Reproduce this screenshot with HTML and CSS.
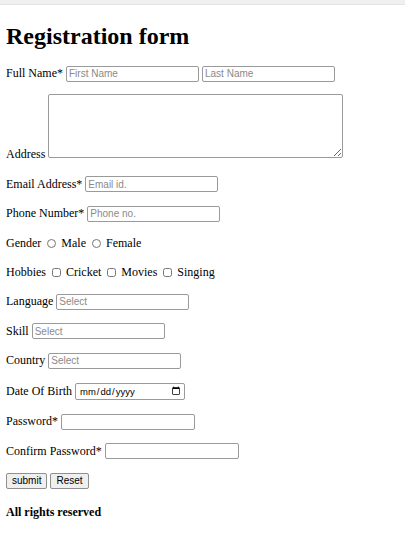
FILE: index.html
```html
<!DOCTYPE html>
<html>
<head>
<meta charset="utf-8">
<title>Registration form</title>
<link rel="stylesheet" href="styles.css">
</head>
<body>
<div class="topbar"></div>
<div class="page">
  <h1 class="title">Registration form</h1>
  <form class="form">
    <p class="row">Full Name* <input class="field" type="text" placeholder="First Name"> <input class="field" type="text" placeholder="Last Name"></p>
    <p class="row">Address <textarea class="area"></textarea></p>
    <p class="row">Email Address* <input class="field" type="email" placeholder="Email id."></p>
    <p class="row">Phone Number* <input class="field" type="text" placeholder="Phone no."></p>
    <p class="row">Gender <input class="radio" type="radio" name="g"> Male <input class="radio" type="radio" name="g"> Female</p>
    <p class="row">Hobbies <input class="check" type="checkbox"> Cricket <input class="check" type="checkbox"> Movies <input class="check" type="checkbox"> Singing</p>
    <p class="row">Language <input class="field" type="text" placeholder="Select"></p>
    <p class="row">Skill <input class="field" type="text" placeholder="Select"></p>
    <p class="row">Country <input class="field" type="text" placeholder="Select"></p>
    <p class="row row-tall">Date Of Birth <input class="field date" type="date"></p>
    <p class="row row-tall">Password* <input class="field pass" type="password"></p>
    <p class="row">Confirm Password* <input class="field pass" type="password"></p>
    <p class="row"><input class="btn" type="submit" value="submit"> <input class="btn" type="reset" value="Reset"></p>
  </form>
  <h4 class="footer">All rights reserved</h4>
</div>
</body>
</html>
```
FILE: styles.css
```css
html, body {
  margin: 0;
  padding: 0;
  background: #fff;
}
body {
  font-family: "Liberation Serif", "Times New Roman", serif;
  font-size: 12px;
  color: #000;
}
.topbar {
  height: 4px;
  background: #f0f0f0;
  border-bottom: 1px solid #e4e4e4;
}
.page {
  padding: 0 6px;
}
.title {
  font-size: 24px;
  font-weight: bold;
  margin: 18px 0 15px;
}
.form {
  margin: 0;
}
.row {
  margin: 12px 0;
  line-height: 17.4px;
}
.row-tall {
  line-height: 18.6px;
}
.field {
  box-sizing: border-box;
  width: 133px;
  height: 16px;
  font-family: "Liberation Sans", Arial, sans-serif;
  font-size: 10px;
  line-height: normal;
  padding: 1px 2px;
  border: 1px solid #9a9a9a;
  border-radius: 2px;
  background: #fff;
  vertical-align: baseline;
}
.field::placeholder {
  color: #8a8a8a;
}
.pass {
  width: 134px;
}
.date {
  width: 110px;
  height: 17px;
  font-size: 9.5px;
  padding: 1px 3px;
}
.date::-webkit-calendar-picker-indicator {
  width: 10px;
  height: 10px;
  padding: 0;
  margin: 0;
  filter: contrast(3);
}
.area {
  box-sizing: border-box;
  width: 295px;
  height: 64px;
  border: 1px solid #9a9a9a;
  border-radius: 2px;
  font-size: 10px;
  padding: 2px;
  vertical-align: baseline;
  resize: both;
}
.radio, .check {
  width: 9px;
  height: 9px;
  margin: 0 2px 0 3px;
  vertical-align: -1px;
}
.btn {
  font-family: "Liberation Sans", Arial, sans-serif;
  font-size: 10px;
  line-height: normal;
  height: 16px;
  padding: 0 5px;
  margin: 0;
  border: 1px solid #8f8f8f;
  border-radius: 2px;
  background: #efefef;
  color: #000;
}
.footer {
  font-size: 12px;
  font-weight: bold;
  margin: 15px 0;
}
```
